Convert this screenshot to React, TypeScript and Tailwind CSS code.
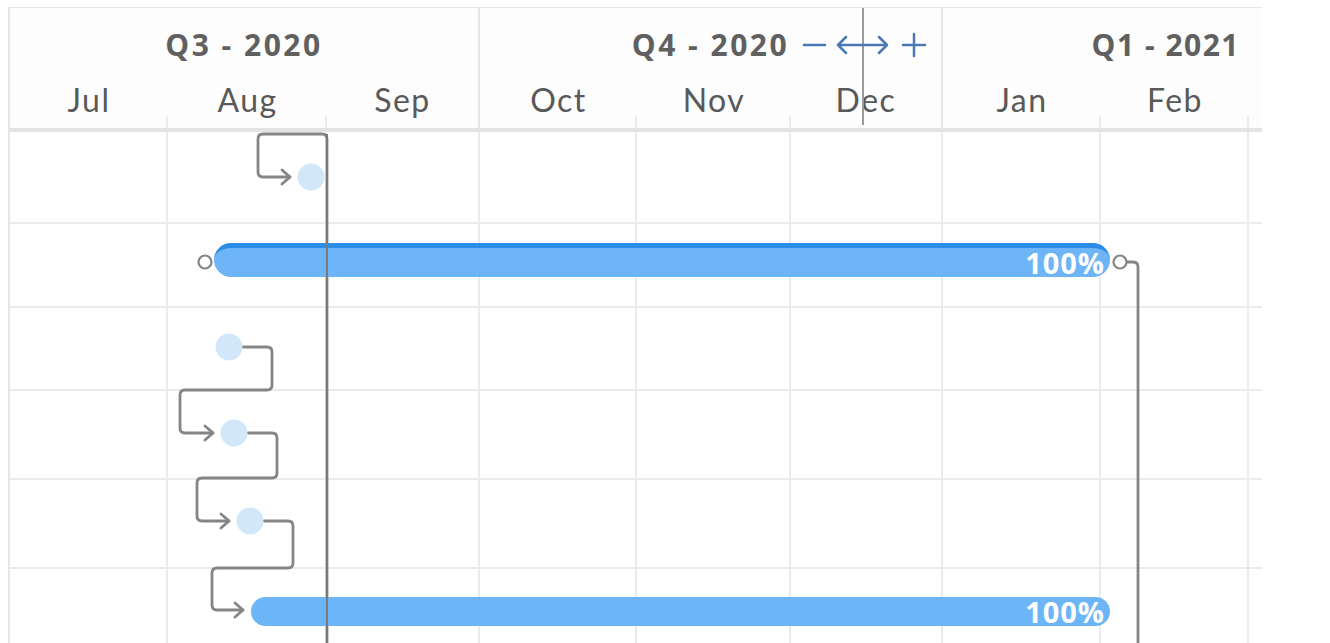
import React from "react";

const months = [
  { name: "Jul", w: "w-[158px]", tick: true },
  { name: "Aug", w: "w-[159px]", tick: true },
  { name: "Sep", w: "w-[153px]", tick: false },
  { name: "Oct", w: "w-[157px]", tick: true },
  { name: "Nov", w: "w-[154px]", tick: true },
  { name: "Dec", w: "w-[152px]", tick: false },
  { name: "Jan", w: "w-[158px]", tick: true },
  { name: "Feb", w: "w-[148px]", tick: true },
  { name: "", w: "w-[13px]", tick: false },
];

const rowHeights = ["h-[92px]", "h-[84px]", "h-[83px]", "h-[89px]", "h-[89px]", "h-[80px]"];

function roundedPath(pts: [number, number][], r = 5) {
  let d = `M${pts[0][0]},${pts[0][1]}`;
  for (let i = 1; i < pts.length - 1; i++) {
    const [px, py] = pts[i - 1];
    const [cx, cy] = pts[i];
    const [nx, ny] = pts[i + 1];
    const d1x = Math.sign(cx - px), d1y = Math.sign(cy - py);
    const d2x = Math.sign(nx - cx), d2y = Math.sign(ny - cy);
    d += ` L${cx - d1x * r},${cy - d1y * r} Q${cx},${cy} ${cx + d2x * r},${cy + d2y * r}`;
  }
  const last = pts[pts.length - 1];
  d += ` L${last[0]},${last[1]}`;
  return d;
}

function arrow(x: number, y: number) {
  return `M${x - 8},${y - 7} L${x},${y} L${x - 8},${y + 7}`;
}

export default function App() {
  const stroke = "#858585";
  const connectors: [number, number][][] = [
    [[327, 643], [327, 134], [258, 134], [258, 177], [290, 177]],
    [[243, 347], [272, 347], [272, 390], [180, 390], [180, 433], [213, 433]],
    [[248, 433], [277, 433], [277, 478], [197, 478], [197, 521], [229, 521]],
    [[264, 521], [293, 521], [293, 568], [212, 568], [212, 610], [243, 610]],
    [[1127, 262], [1138, 262], [1138, 643]],
  ];
  const arrows: [number, number][] = [
    [290, 177],
    [213, 433],
    [229, 521],
    [243, 610],
  ];
  return (
    <div className="relative w-[1330px] h-[643px] overflow-hidden bg-white font-['Lato',sans-serif]">
      <div className="pt-[7px] pl-[8px]">
        <div className="w-[1254px] border-l-2 border-t border-[#e6e6e6]">
          {/* Header */}
          <div className="border-b-[4px] border-[#e3e3e3] bg-[#fdfdfd]">
            <div className="flex h-[67px] text-[#606060] font-bold text-[30px] tracking-[2.5px] font-['Open_Sans',sans-serif]">
              <div className="w-[470px] flex items-center justify-center pt-[6px] border-r-2 border-[#e6e6e6]">Q3 - 2020</div>
              <div className="w-[463px] flex items-center justify-center pt-[6px] border-r-2 border-[#e6e6e6]">Q4 - 2020</div>
              <div className="w-[319px] flex items-center justify-end pr-[22px] pt-[6px] tracking-[1.5px]">Q1 - 2021</div>
            </div>
            <div className="flex h-[53px] text-[#595959] text-[32px] tracking-[1.5px]">
              {months.map((m, i) => (
                <div
                  key={i}
                  className={`${m.w} relative flex items-center justify-center pb-[4px] ${
                    i === 2 || i === 5 ? "border-r-2 border-[#e6e6e6]" : ""
                  }`}
                >
                  {m.name}
                  {m.tick && <div className="absolute right-0 bottom-0 h-[12px] w-[2px] bg-[#ececec]" />}
                </div>
              ))}
            </div>
          </div>
          {/* Body grid */}
          <div className="flex flex-col">
            {rowHeights.map((h, r) => (
              <div key={r} className={`flex ${h} ${r < 5 ? "border-b-2 border-[#ebebeb]" : ""}`}>
                {months.map((m, i) => (
                  <div key={i} className={`${m.w} ${i < 8 ? "border-r-2 border-[#ebebeb]" : ""}`} />
                ))}
              </div>
            ))}
          </div>
        </div>
      </div>

      {/* Zoom controls overlay */}
      <div className="absolute left-[862px] top-[8px] h-[117px] w-[2px] bg-[#9a9a9a]" />
      <svg className="absolute left-[798px] top-[30px]" width="132" height="32" viewBox="798 30 132 32">
        <g stroke="#4b79b6" strokeWidth="2.5" fill="none" strokeLinecap="round" strokeLinejoin="round">
          <path d="M804,45 H825" />
          <path d="M838,45 H887 M846,37 L838,45 L846,53 M879,37 L887,45 L879,53" />
          <path d="M903,45 H925 M914,34 V56" />
        </g>
      </svg>

      {/* Connectors and milestones */}
      <svg className="absolute left-0 top-0" width="1330" height="643" viewBox="0 0 1330 643">
        <g stroke={stroke} strokeWidth="2.8" fill="none" strokeLinecap="round" strokeLinejoin="round">
          {connectors.map((p, i) => (
            <path key={i} d={roundedPath(p)} />
          ))}
          {arrows.map(([x, y], i) => (
            <path key={i} d={arrow(x, y)} />
          ))}
        </g>
        <circle cx="311" cy="177" r="13.5" fill="#d3e7fb" />
        <circle cx="229" cy="347" r="13.5" fill="#d3e7fb" />
        <circle cx="234" cy="433" r="13.5" fill="#d3e7fb" />
        <circle cx="250" cy="521" r="13.5" fill="#d3e7fb" />
        <circle cx="205" cy="262" r="6.5" fill="#fff" stroke={stroke} strokeWidth="2.2" />
        <circle cx="1120" cy="262" r="6.5" fill="#fff" stroke={stroke} strokeWidth="2.2" />
      </svg>

      {/* Bars */}
      <div className="absolute left-[214px] top-[243px] h-[34px] w-[896px] rounded-full bg-[#6db5f6] border-t-[5px] border-[#2c8de6] flex items-center justify-end pr-[5px] pb-[1px] text-white font-bold text-[29px] tracking-[1px] leading-none font-['Open_Sans',sans-serif]">
        100%
      </div>
      <div className="absolute left-[251px] top-[597px] h-[29px] w-[859px] rounded-full bg-[#6cb6f7] flex items-center justify-end pr-[5px] text-white font-bold text-[29px] tracking-[1px] leading-none font-['Open_Sans',sans-serif]">
        100%
      </div>
      {/* redraw long vertical line over bars */}
      <div className="absolute left-[326px] top-[134px] h-[509px] w-[2px] bg-[#7a7a7a]" />
    </div>
  );
}
